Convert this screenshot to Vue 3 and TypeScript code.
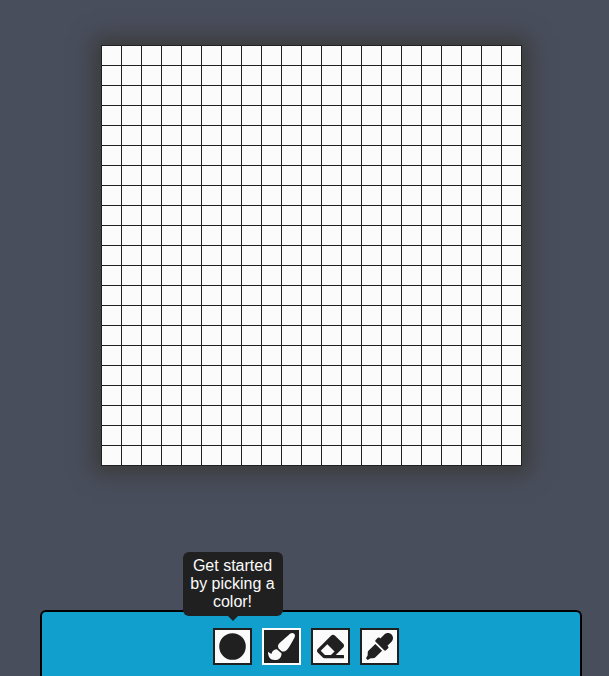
<script setup lang="ts">
import { ref } from 'vue'

type Tool = 'brush' | 'eraser' | 'picker'

interface ToolButton {
  id: Tool
  label: string
  path: string
}

const size = 21
const blank = '#fbfbfb'
const cells = ref<string[]>(Array.from({ length: size * size }, () => blank))
const color = ref('#202020')
const active = ref<Tool>('brush')

const tools: ToolButton[] = [
  {
    id: 'brush',
    label: 'Brush',
    path: 'M167.02 309.34c-40.12 2.58-76.53 17.86-97.19 72.3-2.35 6.21-8 9.98-14.59 9.98-11.11 0-45.46-27.67-55.25-34.35C0 439.62 37.93 512 128 512c75.86 0 128-43.77 128-120.19 0-3.11-.65-6.08-.97-9.13l-88.01-73.34zM457.89 0c-15.16 0-29.37 6.71-40.21 16.45C213.27 199.05 192 203.34 192 257.09c0 13.7 3.25 26.76 8.73 38.7l63.82 53.18c7.21 1.8 14.64 3.03 22.39 3.03 62.11 0 98.11-45.47 211.16-256.46 7.38-14.35 13.9-29.85 13.9-45.99C512 20.64 486 0 457.89 0z',
  },
  {
    id: 'eraser',
    label: 'Eraser',
    path: 'M497.941 273.941c18.745-18.745 18.745-49.137 0-67.882l-160-160c-18.745-18.745-49.136-18.746-67.883 0l-256 256c-18.745 18.745-18.745 49.137 0 67.882l96 96A48.004 48.004 0 0 0 144 480h356c6.627 0 12-5.373 12-12v-40c0-6.627-5.373-12-12-12H355.883l142.058-142.059zm-302.627-62.627l137.373 137.373L265.373 416H150.628l-80-80 124.686-124.686z',
  },
  {
    id: 'picker',
    label: 'Eyedropper',
    path: 'M50.75 333.25c-12 12-18.75 28.28-18.75 45.26V424L0 480l32 32 56-32h45.49c16.97 0 33.25-6.74 45.25-18.74l126.64-126.62-128-128L50.75 333.25zM483.88 28.12c-37.47-37.5-98.28-37.5-135.75 0l-77.09 77.09-13.1-13.1c-9.44-9.44-24.65-9.31-33.94 0l-40.97 40.97c-9.37 9.37-9.37 24.57 0 33.94l161.94 161.94c9.44 9.44 24.65 9.31 33.94 0L419.88 288c9.37-9.37 9.37-24.57 0-33.94l-13.1-13.1 77.09-77.09c37.51-37.48 37.51-98.26.01-135.75z',
  },
]

function useTool(index: number): void {
  if (active.value === 'picker') {
    color.value = cells.value[index]
  } else {
    cells.value[index] = active.value === 'brush' ? color.value : blank
  }
}
</script>

<template>
  <main class="page">
    <div class="board">
      <div
        v-for="(cell, i) in cells"
        :key="i"
        class="cell"
        :style="{ backgroundColor: cell }"
        @mousedown="useTool(i)"
      ></div>
    </div>

    <div class="toolbar">
      <div class="slot">
        <button class="tool" type="button" aria-label="Color" aria-describedby="color-tip">
          <svg class="icon" viewBox="0 0 512 512" aria-hidden="true">
            <circle cx="256" cy="256" r="252" :fill="color" />
          </svg>
        </button>
        <div id="color-tip" class="tip" role="tooltip">Get started by picking a color!</div>
      </div>
      <div v-for="tool in tools" :key="tool.id" class="slot">
        <button
          class="tool"
          :class="{ active: active === tool.id }"
          type="button"
          :aria-label="tool.label"
          :aria-pressed="active === tool.id"
          @click="active = tool.id"
        >
          <svg class="icon" viewBox="0 0 512 512" aria-hidden="true">
            <path :d="tool.path" fill="currentColor" />
          </svg>
        </button>
      </div>
    </div>
  </main>
</template>

<style>
body {
  background: #494e5c;
}
</style>

<style scoped>
.page {
  box-sizing: border-box;
  min-height: 100vh;
  padding: 45px 27px 0 40px;
  display: flex;
  flex-direction: column;
  align-items: center;
  justify-content: space-between;
  font-family: "Liberation Sans", Arial, sans-serif;
  font-size: 16px;
}

.board {
  display: grid;
  grid-template-columns: repeat(21, 20px);
  grid-auto-rows: 20px;
  border-top: 1px solid #202020;
  border-left: 1px solid #202020;
  box-shadow: 0 0 20px 8px #3b3b3b;
}

.cell {
  border-right: 1px solid #202020;
  border-bottom: 1px solid #202020;
}

.toolbar {
  box-sizing: border-box;
  width: 100%;
  padding: 16px 0 11px;
  display: flex;
  justify-content: center;
  background: #119fce;
  border: 2px solid #000;
  border-bottom: 0;
  border-radius: 6px 6px 0 0;
}

.slot {
  position: relative;
  margin-right: 10px;
}

.tool {
  box-sizing: border-box;
  width: 39px;
  height: 37px;
  padding: 0;
  display: flex;
  align-items: center;
  justify-content: center;
  color: #202020;
  background: #fbfbfb;
  border: 2px solid #202020;
  cursor: pointer;
}

.tool.active {
  color: #fbfbfb;
  background: #202020;
  border-color: #fbfbfb;
}

.icon {
  width: 27px;
  height: 27px;
}

.tip {
  position: absolute;
  bottom: calc(100% + 12px);
  left: 50%;
  box-sizing: border-box;
  width: 100px;
  margin-left: -50px;
  padding: 5px;
  color: #fbfbfb;
  background: #202020;
  border-radius: 6px;
  line-height: 18px;
  text-align: center;
}

.tip::after {
  content: "";
  position: absolute;
  top: 100%;
  left: 50%;
  margin-left: -5px;
  border: 5px solid transparent;
  border-top-color: #202020;
}
</style>
